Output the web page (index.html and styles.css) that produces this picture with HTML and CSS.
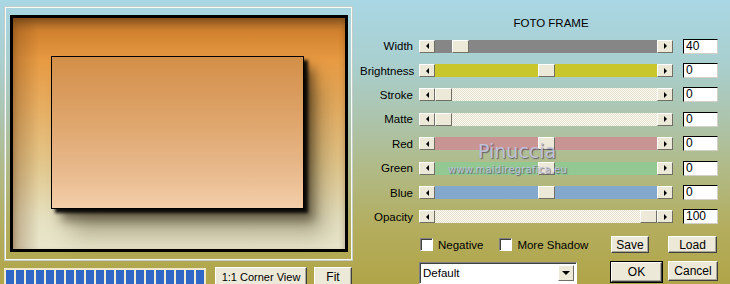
FILE: index.html
```html
<!DOCTYPE html>
<html lang="en">
<head>
  <meta charset="UTF-8" />
  <title>Foto Frame</title>
  <link rel="stylesheet" href="styles.css">
</head>
<body>
  <div class="dialog">
    <div class="left">
      <div class="frame">
        <div class="preview">
          <div class="photo"></div>
        </div>
      </div>
      <div class="bottom-left">
        <div class="progress">
          <span></span><span></span><span></span><span></span><span></span>
          <span></span><span></span><span></span><span></span><span></span>
          <span></span><span></span><span></span><span></span><span></span>
          <span></span><span></span><span></span><span></span><span></span>
        </div>
        <button class="btn corner">1:1 Corner View</button>
        <button class="btn fit">Fit</button>
      </div>
    </div>

    <div class="right">
      <div class="title">FOTO FRAME</div>

      <div class="sliders">
        <div class="row">
          <span class="label">Width</span>
          <div class="scroll">
            <span class="arrow left-arrow"></span>
            <div class="track gray"><span class="thumb" style="margin-left:17px"></span></div>
            <span class="arrow right-arrow"></span>
          </div>
          <span class="value">40</span>
        </div>
        <div class="row">
          <span class="label">Brightness</span>
          <div class="scroll">
            <span class="arrow left-arrow"></span>
            <div class="track yellow"><span class="thumb" style="margin-left:103px"></span></div>
            <span class="arrow right-arrow"></span>
          </div>
          <span class="value">0</span>
        </div>
        <div class="row">
          <span class="label">Stroke</span>
          <div class="scroll">
            <span class="arrow left-arrow"></span>
            <div class="track hatch"><span class="thumb" style="margin-left:0px"></span></div>
            <span class="arrow right-arrow"></span>
          </div>
          <span class="value">0</span>
        </div>
        <div class="row">
          <span class="label">Matte</span>
          <div class="scroll">
            <span class="arrow left-arrow"></span>
            <div class="track hatch"><span class="thumb" style="margin-left:0px"></span></div>
            <span class="arrow right-arrow"></span>
          </div>
          <span class="value">0</span>
        </div>
        <div class="row">
          <span class="label">Red</span>
          <div class="scroll">
            <span class="arrow left-arrow"></span>
            <div class="track red"><span class="thumb" style="margin-left:103px"></span></div>
            <span class="arrow right-arrow"></span>
          </div>
          <span class="value">0</span>
        </div>
        <div class="row">
          <span class="label">Green</span>
          <div class="scroll">
            <span class="arrow left-arrow"></span>
            <div class="track green"><span class="thumb" style="margin-left:103px"></span></div>
            <span class="arrow right-arrow"></span>
          </div>
          <span class="value">0</span>
        </div>
        <div class="row">
          <span class="label">Blue</span>
          <div class="scroll">
            <span class="arrow left-arrow"></span>
            <div class="track blue"><span class="thumb" style="margin-left:103px"></span></div>
            <span class="arrow right-arrow"></span>
          </div>
          <span class="value">0</span>
        </div>
        <div class="row">
          <span class="label">Opacity</span>
          <div class="scroll">
            <span class="arrow left-arrow"></span>
            <div class="track hatch"><span class="thumb" style="margin-left:205px"></span></div>
            <span class="arrow right-arrow"></span>
          </div>
          <span class="value">100</span>
        </div>
      </div>

      <div class="options">
        <div class="checks">
          <label class="check"><span class="box"></span>Negative</label>
          <label class="check"><span class="box"></span>More Shadow</label>
        </div>
        <button class="btn save">Save</button>
        <button class="btn load">Load</button>
      </div>

      <div class="actions">
        <div class="select">
          <span class="select-text">Default</span>
          <span class="select-arrow"></span>
        </div>
        <button class="btn ok">OK</button>
        <button class="btn cancel">Cancel</button>
      </div>

      <div class="watermark">
        <div class="wm-name">Pinuccia</div>
        <div class="wm-url">www.maidiregrafica.eu</div>
      </div>
    </div>
  </div>
</body>
</html>
```

FILE: styles.css
```css
body {
  margin: 0;
  font-family: "Liberation Sans", Arial, sans-serif;
  font-size: 11px;
  color: #000;
}
.dialog {
  width: 730px;
  height: 284px;
  overflow: hidden;
  display: flex;
  background: linear-gradient(to bottom, #a9d7e4 0%, #a9cfcf 22%, #acc4ac 42%, #b1ba86 60%, #b3ad5e 80%, #b1a548 100%);
}

/* preview side */
.left {
  width: 360px;
  padding: 6px 0 0 4px;
  box-sizing: border-box;
}
.frame {
  width: 349px;
  height: 255px;
  box-sizing: border-box;
  border: 1px solid #c4cccb;
  box-shadow: inset 0 0 0 1px #fbfbf6;
  padding: 8px 4px 8px 5px;
}
.preview {
  width: 338px;
  height: 237px;
  box-sizing: border-box;
  border: 3px solid #000;
  padding: 38px 0 0 38px;
  background:
    linear-gradient(to right, rgba(110, 60, 20, 0.35), rgba(110, 60, 20, 0) 26px),
    linear-gradient(to bottom, #9e6428 0px, #d2822e 14px, #e79a42 42px, #e6b066 95px, #e2c88e 150px, #e5e0c0 200px, #e8e6cc 231px);
  box-shadow: inset 0 4px 6px rgba(90, 50, 10, 0.4);
}
.photo {
  width: 253px;
  height: 153px;
  box-sizing: border-box;
  border: 1px solid #000;
  background: linear-gradient(to bottom, #d38f48 0%, #dea46a 40%, #e8b98c 75%, #f3cea9 100%);
  box-shadow: 4px 4px 3px rgba(0, 0, 0, 0.9), 10px 12px 10px rgba(30, 20, 5, 0.5), 20px 26px 22px rgba(60, 50, 20, 0.3);
}
.bottom-left {
  display: flex;
  align-items: flex-start;
  margin-top: 7px;
}
.progress {
  width: 202px;
  height: 18px;
  box-sizing: border-box;
  border: 1px solid #efe8cc;
  padding: 1px;
  display: flex;
  gap: 2px;
  background: #f1ebd2;
}
.progress span {
  width: 8px;
  background: #2f67c6;
}

/* buttons */
.btn {
  font: inherit;
  font-size: 12px;
  color: #000;
  background: #ece9d8;
  border: 1px solid;
  border-color: #fff #404040 #404040 #fff;
  box-shadow: inset -1px -1px 0 #aca899;
  padding: 0;
  height: 20px;
  cursor: pointer;
}
.corner {
  width: 92px;
  margin-left: 9px;
  margin-top: -1px;
  font-size: 11px;
}
.fit {
  width: 38px;
  margin-left: 7px;
  margin-top: -1px;
}

/* controls side */
.right {
  width: 370px;
  position: relative;
}
.title {
  margin-top: 16px;
  line-height: 14px;
  text-align: center;
  padding-left: 12px;
  font-size: 11.5px;
}
.sliders {
  margin-top: 4px;
}
.row {
  display: flex;
  align-items: center;
  height: 24.4px;
}
.label {
  width: 53px;
  text-align: right;
  margin-right: 6px;
  font-size: 11.5px;
}
.scroll {
  width: 254px;
  height: 13px;
  display: flex;
}
.arrow, .thumb {
  box-sizing: border-box;
  height: 13px;
  background: #ece9d8;
  border: 1px solid;
  border-color: #fff #716f64 #716f64 #fff;
}
.arrow {
  width: 16px;
  display: flex;
  align-items: center;
  justify-content: center;
}
.left-arrow::before {
  content: "";
  border-right: 3px solid #000;
  border-top: 3px solid transparent;
  border-bottom: 3px solid transparent;
}
.right-arrow::before {
  content: "";
  border-left: 3px solid #000;
  border-top: 3px solid transparent;
  border-bottom: 3px solid transparent;
}
.track {
  flex: 1;
  height: 13px;
  display: flex;
}
.thumb {
  width: 17px;
}
.gray { background: #868686; }
.yellow { background: #c9c62c; }
.red { background: #c89494; }
.green { background: #93c893; }
.blue { background: #83a8cc; }
.hatch {
  background: repeating-conic-gradient(#e4e0cc 0 25%, #fbfaf2 0 50%) 0 0 / 2px 2px;
}
.value {
  margin-left: 10px;
  width: 35px;
  height: 15px;
  box-sizing: border-box;
  background: #fff;
  border: 1px solid #000;
  border-right-color: #d4d0c8;
  border-bottom-color: #d4d0c8;
  padding-left: 2px;
  line-height: 13px;
  font-size: 12px;
}

.options {
  display: flex;
  align-items: center;
  height: 17px;
  margin-top: 7px;
  padding-left: 60px;
}
.checks {
  width: 191px;
  display: flex;
  align-items: center;
  gap: 16px;
}
.check {
  display: flex;
  align-items: center;
  gap: 5px;
  font-size: 11.5px;
}
.box {
  width: 13px;
  height: 13px;
  box-sizing: border-box;
  background: #fff;
  border: 1px solid;
  border-color: #808080 #fff #fff #808080;
  box-shadow: inset 1px 1px 0 #404040;
}
.save {
  width: 38px;
  height: 17px;
}
.load {
  width: 49px;
  height: 17px;
  margin-left: 19px;
}
.actions {
  display: flex;
  align-items: flex-start;
  margin-top: 9px;
  padding-left: 59px;
}
.select {
  width: 158px;
  height: 22px;
  box-sizing: border-box;
  background: #fff;
  border: 1px solid;
  border-color: #808080 #fff #fff #808080;
  box-shadow: inset 1px 1px 0 #404040;
  display: flex;
  align-items: flex-start;
  padding: 2px 2px 0 3px;
}
.select-text {
  flex: 1;
  line-height: 16px;
  font-size: 11.5px;
}
.select-arrow {
  width: 16px;
  height: 16px;
  box-sizing: border-box;
  background: #ece9d8;
  border: 1px solid;
  border-color: #fff #716f64 #716f64 #fff;
  display: flex;
  align-items: center;
  justify-content: center;
}
.select-arrow::before {
  content: "";
  border-top: 4px solid #000;
  border-left: 4px solid transparent;
  border-right: 4px solid transparent;
}
.ok {
  width: 51px;
  height: 20px;
  margin-left: 34px;
  outline: 1px solid #000;
  outline-offset: 0;
}
.cancel {
  width: 50px;
  height: 20px;
  margin-left: 6px;
  margin-top: -1px;
}

.watermark {
  position: absolute;
  left: 88px;
  top: 140px;
  pointer-events: none;
  font-family: "DejaVu Sans", sans-serif;
  color: rgba(196, 196, 222, 0.95);
  text-shadow: 1px 1px 1px rgba(50, 50, 80, 0.65);
}
.wm-name {
  margin-left: 30px;
  font-size: 19px;
  line-height: 23px;
}
.wm-url {
  font-size: 10px;
  line-height: 13px;
  letter-spacing: 0.2px;
}
```
